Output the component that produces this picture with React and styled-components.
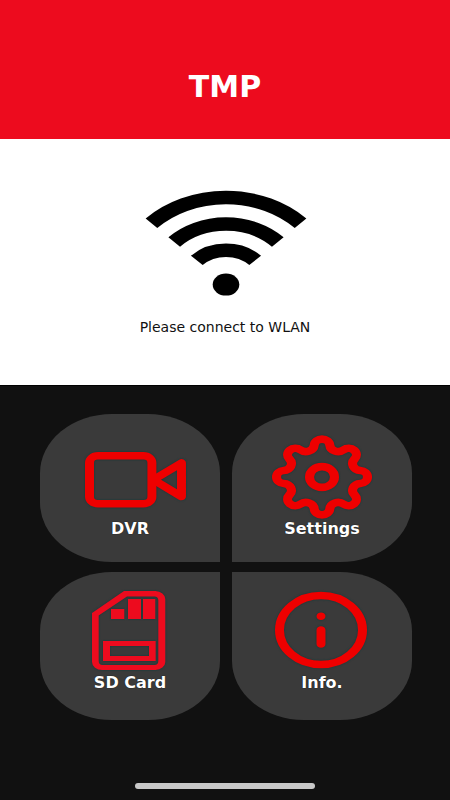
import React from "react";
import styled, { createGlobalStyle } from "styled-components";

const GlobalStyle = createGlobalStyle`
  * {
    box-sizing: border-box;
    margin: 0;
    padding: 0;
  }
  body {
    background: #111111;
    font-family: "DejaVu Sans", Verdana, sans-serif;
  }
`;

const WifiIcon = () => (
  <svg width="164" height="106" viewBox="-83 -94 164 106" aria-hidden="true">
    <g transform="scale(1.21 1)" fill="none" stroke="#000" strokeWidth="13.5">
      <path d="M-61.6 -60.7A86.5 86.5 0 0 1 61.6 -60.7" />
      <path d="M-42.8 -42A60 60 0 0 1 42.8 -42" />
      <path d="M-24.1 -23.6A33.7 33.7 0 0 1 24.1 -23.6" />
      <circle r="11" cy="0.6" fill="#000" stroke="none" />
    </g>
  </svg>
);

const CameraIcon = () => (
  <Icon viewBox="-58 -43 116 84">
    <g
      transform="translate(-51 -26) scale(1.2 1)"
      fill="none"
      stroke="#ee0000"
      strokeWidth="7.5"
      strokeLinejoin="round"
    >
      <rect x="8.75" y="3.75" width="52" height="48" rx="7" />
      <path d="M62 27.8L85.4 11V44.6Z" />
    </g>
  </Icon>
);

// eight round teeth joined by round valleys
const gearPath = () => {
  const tip = 31.4;
  const tipR = 6.5;
  const valleyR = 7;
  const half = Math.PI / 8;
  const across = tip * Math.sin(half);
  const valley =
    tip * Math.cos(half) + Math.sqrt((tipR + valleyR) ** 2 - across ** 2);
  const t = tipR / (tipR + valleyR);
  const x = valley * Math.sin(half) * t;
  const y = tip + (valley * Math.cos(half) - tip) * t;
  const point = (px, angle) => {
    const rx = px * Math.cos(angle) + y * Math.sin(angle);
    const ry = px * Math.sin(angle) - y * Math.cos(angle);
    return `${rx.toFixed(2)} ${ry.toFixed(2)}`;
  };
  let d = `M${point(-x, 0)}`;
  for (let i = 0; i < 8; i++) {
    const angle = i * half * 2;
    d += `A${tipR} ${tipR} 0 0 1 ${point(x, angle)}`;
    d += `A${valleyR} ${valleyR} 0 0 0 ${point(-x, angle + half * 2)}`;
  }
  return d + "Z";
};

const GearIcon = () => (
  <Icon viewBox="-58 -42 116 84">
    <g
      transform="scale(1.2 1)"
      fill="none"
      stroke="#ee0000"
      strokeWidth="7.6"
    >
      <path d={gearPath()} />
      <circle r="10.4" />
    </g>
  </Icon>
);

const SdCardIcon = () => (
  <Icon viewBox="-20 -2 116 84">
    <g fill="#ed0b1e" fillRule="evenodd">
      <path d="M32 0H63.5A10 8 0 0 1 73.3 8V71A10 8 0 0 1 63.5 79H10A10 8 0 0 1 0 71V22ZM35 5.5L6.7 24.5V70A4 4 0 0 0 10.7 74H62.3A4 4 0 0 0 66.3 70V9.5A4 4 0 0 0 62.3 5.5Z" />
      <path d="M19 18H32.3V28H19ZM36 8H49V28H36ZM51 8H63.3V28H51Z" />
      <path d="M11 50H63.7V70H11ZM18 55V65H57V55Z" />
    </g>
  </Icon>
);

const InfoIcon = () => (
  <Icon viewBox="-57 -41 116 84">
    <g
      transform="scale(1.2 1)"
      fill="none"
      stroke="#ee0000"
      strokeWidth="7.5"
      strokeLinecap="round"
    >
      <circle r="34.6" />
      <path d="M0 -13.8V-13.7M0 0V14" />
    </g>
  </Icon>
);

const App = () => {
  return (
    <Page>
      <GlobalStyle />
      <Header>
        <h1>TMP</h1>
      </Header>
      <Status>
        <WifiIcon />
        <p>Please connect to WLAN</p>
      </Status>
      <Menu>
        <Tile $corner="bottom-right">
          <CameraIcon />
          <Label>DVR</Label>
        </Tile>
        <Tile $corner="bottom-left">
          <GearIcon />
          <Label>Settings</Label>
        </Tile>
        <Tile $corner="top-right" $raised>
          <SdCardIcon />
          <Label>SD Card</Label>
        </Tile>
        <Tile $corner="top-left" $raised>
          <InfoIcon />
          <Label>Info.</Label>
        </Tile>
      </Menu>
      <HomeBar />
    </Page>
  );
};

//styled

const Page = styled.div`
  min-height: 100vh;
  display: flex;
  flex-direction: column;
  background: #111111;
`;

const Header = styled.header`
  display: flex;
  justify-content: center;
  padding: 69px 0 34px;
  background: #ed0b1e;
  color: #fff;
  h1 {
    font-size: 30px;
    line-height: 36px;
    font-weight: bold;
  }
`;

const Status = styled.section`
  display: flex;
  flex-direction: column;
  align-items: center;
  padding: 51px 0 48px;
  background: #fff;
  border-bottom: 1px solid #000;
  p {
    margin-top: 21px;
    font-size: 14px;
    line-height: 20px;
    color: #111;
  }
`;

const Menu = styled.nav`
  display: grid;
  grid-template-columns: 1fr 1fr;
  gap: 10px 12px;
  padding: 28px 38px 24px 40px;
`;

const Tile = styled.button`
  display: flex;
  flex-direction: column;
  align-items: center;
  height: 148px;
  padding-top: ${(props) => (props.$raised ? "17px" : "21px")};
  border: none;
  border-radius: 40%;
  border-${(props) => props.$corner}-radius: 0;
  background: #3a3a3a;
  color: #fff;
  font-family: inherit;
  cursor: pointer;
`;

const Icon = styled.svg.attrs({ "aria-hidden": true })`
  width: 116px;
  height: 84px;
  flex-shrink: 0;
  filter: drop-shadow(0 0 1px #0c3c3c);
`;

const Label = styled.span`
  font-size: 16px;
  line-height: 20px;
  font-weight: bold;
  text-shadow: 0 0 1px #000;
`;

const HomeBar = styled.div`
  width: 40%;
  height: 6px;
  margin: auto auto 11px;
  border-radius: 3px;
  background: #c8c8c8;
`;

export default App;
